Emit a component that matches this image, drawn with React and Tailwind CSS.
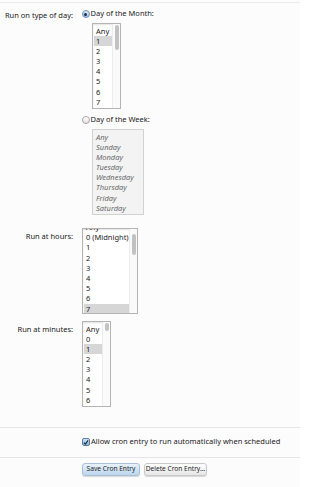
import React from 'react';

const dayOfMonth = ['Any', '1', '2', '3', '4', '5', '6', '7'];
const weekDays = ['Any', 'Sunday', 'Monday', 'Tuesday', 'Wednesday', 'Thursday', 'Friday', 'Saturday'];
const hours = ['Any', '0 (Midnight)', '1', '2', '3', '4', '5', '6', '7'];
const minutes = ['Any', '0', '1', '2', '3', '4', '5', '6'];

// fake listbox, thumb is drawn over the track
const ListBox = ({ items, selected, boxClass, listClass = '', thumbClass }) => (
    <div className={`relative overflow-hidden border border-[#b4b4b4] bg-white shadow-[inset_0_1px_2px_rgba(0,0,0,0.12)] ${boxClass}`}>
        <div className={`pt-[1.5px] pl-[1px] pr-[8px] ${listClass}`}>
            {items.map((item) => (
                <div
                    key={item}
                    className={`h-[10.2px] leading-[10.2px] pl-[2px] whitespace-nowrap ${item === selected ? 'bg-[#d6d6d6]' : ''}`}
                >
                    {item}
                </div>
            ))}
        </div>
        <div className="absolute top-0 right-0 bottom-0 w-[8px] border-l border-[#ececec] bg-[#fafafa]" />
        <div className={`absolute right-[1px] w-[4px] rounded-full bg-[#c2c2c2] ${thumbClass}`} />
    </div>
);

const Radio = ({ checked }) => (
    <span
        className={`flex items-center justify-center w-[8px] h-[8px] rounded-full border ${
            checked
                ? 'border-[#6f8fb0] bg-gradient-to-b from-[#dcebf8] to-[#9ec3e6]'
                : 'border-[#a8a8a8] bg-gradient-to-b from-[#ffffff] to-[#e2e2e2]'
        }`}
    >
        {checked && <span className="w-[3px] h-[3px] rounded-full bg-[#1f2f45]" />}
    </span>
);

const Label = ({ children, className = '' }) => (
    <div className={`text-right pr-[9px] leading-[10px] whitespace-nowrap ${className}`}>{children}</div>
);

export default function App() {
    return (
        <div className="w-[300px] h-[487px] overflow-hidden bg-[#fcfcfc] text-[7.5px] text-[#1a1a1a] font-['Noto_Sans',sans-serif]">
            <div className="h-[2px]" />
            <div className="border-t border-[#ebebeb]" />

            <div className="grid grid-cols-[82px_1fr] mt-[6px]">
                <Label className="mt-[0.5px]">Run on type of day:</Label>
                <div>
                    <div className="flex items-center h-[10px] gap-[1px] -ml-[0.5px]">
                        <Radio checked />
                        <span>Day of the Month:</span>
                    </div>
                    <ListBox
                        items={dayOfMonth}
                        selected="1"
                        boxClass="ml-[10px] mt-[4px] w-[29px] h-[86px]"
                        thumbClass="top-[1px] h-[25px]"
                    />
                    <div className="flex items-center h-[10px] gap-[1px] mt-[6px] -ml-[0.5px]">
                        <Radio />
                        <span>Day of the Week:</span>
                    </div>
                    <div className="ml-[10px] mt-[4px] w-[52px] h-[86px] overflow-hidden border border-[#d2d2d2] bg-[#f3f3f3] text-[#6a6a6a] italic">
                        <div className="pt-[1.5px] pl-[1px]">
                            {weekDays.map((d) => (
                                <div key={d} className="h-[10.2px] leading-[10.2px] pl-[2px]">{d}</div>
                            ))}
                        </div>
                    </div>
                </div>
            </div>

            <div className="grid grid-cols-[82px_1fr] mt-[13px]">
                <Label className="mt-[3px]">Run at hours:</Label>
                <ListBox
                    items={hours}
                    selected="7"
                    boxClass="w-[56px] h-[86px]"
                    listClass="-mt-[8.5px]"
                    thumbClass="top-[5px] h-[21px]"
                />
            </div>

            <div className="grid grid-cols-[82px_1fr] mt-[7px]">
                <Label className="mt-[3px]">Run at minutes:</Label>
                <ListBox
                    items={minutes}
                    selected="1"
                    boxClass="w-[29px] h-[86px]"
                    thumbClass="top-[1px] h-[8px]"
                />
            </div>

            <div className="mt-[20px] border-t border-[#e6e6e6]" />
            <div className="grid grid-cols-[82px_1fr] pt-[9px] pb-[10px]">
                <div />
                <label className="flex items-center h-[10px] gap-[1px] whitespace-nowrap">
                    <span className="flex items-center justify-center w-[8px] h-[8px] rounded-[2px] border border-[#5d7fa3] bg-gradient-to-b from-[#cfe2f4] to-[#8db6dd]">
                        <svg viewBox="0 0 8 8" className="w-[7px] h-[7px]">
                            <path d="M1.3 4.2 L3.2 6.2 L6.8 1.2" fill="none" stroke="#17263a" strokeWidth="1.4" />
                        </svg>
                    </span>
                    <span>Allow cron entry to run automatically when scheduled</span>
                </label>
            </div>
            <div className="border-t border-[#e6e6e6]" />

            <div className="grid grid-cols-[82px_1fr] mt-[5px]">
                <div />
                <div className="flex gap-[4px] text-[6.6px]">
                    <button className="w-[58px] h-[13px] rounded-[3px] border border-[#a9c0d8] bg-gradient-to-b from-[#e8f2fb] to-[#bcd5ec] shadow-[0_1px_1px_rgba(0,0,0,0.15)] leading-none text-[#1e1e1e]">
                        Save Cron Entry
                    </button>
                    <button className="w-[63px] h-[13px] rounded-[3px] border border-[#c9c9c9] bg-gradient-to-b from-[#ffffff] to-[#e6e6e6] shadow-[0_1px_1px_rgba(0,0,0,0.15)] leading-none text-[#1e1e1e]">
                        Delete Cron Entry...
                    </button>
                </div>
            </div>
        </div>
    );
}
